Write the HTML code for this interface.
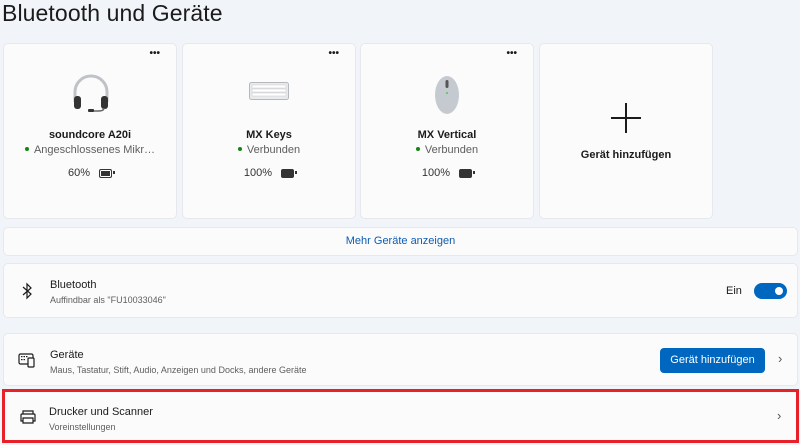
<!DOCTYPE html>
<html><head><meta charset="utf-8"><style>
*{box-sizing:border-box;margin:0;padding:0}
body{width:800px;height:445px;overflow:hidden;background:#f1f4f9;font-family:"Segoe UI","Liberation Sans",sans-serif;color:#1b1b1b;position:relative}
.a{position:absolute}
.card{position:absolute;top:43px;height:176px;width:174px;background:#fbfbfc;border:1px solid #e6e8ec;border-radius:5px}
.dots{position:absolute;top:4px;right:16px;font-size:10px;font-weight:bold;letter-spacing:0}
.name{position:absolute;top:85px;width:100%;text-align:center;font-size:11px;font-weight:bold}
.st{position:absolute;top:100px;width:100%;text-align:center;font-size:11px;color:#5e5e5e}
.st b{display:inline-block;width:4px;height:4px;border-radius:50%;background:#128712;vertical-align:middle;margin-right:5px;position:relative;top:-1px}
.bat{position:absolute;top:123px;width:100%;text-align:center;font-size:11px;color:#333}
.bi{display:inline-block;width:13px;height:9px;border:1.5px solid #333;border-radius:2px;vertical-align:middle;margin-left:9px;position:relative;background:#333;box-shadow:inset 0 0 0 1px #fff}
.bi:after{content:"";position:absolute;right:-4px;top:1.5px;width:2px;height:3px;background:#333}
.row{position:absolute;left:3px;width:795px;background:#fbfbfc;border:1px solid #e6e8ec;border-radius:5px}
.t{position:absolute;left:46px;font-size:11px}
.s{position:absolute;left:46px;font-size:9px;color:#5e5e5e}
</style></head><body>
<div class="a" style="left:2px;top:0;font-size:23px;color:#1b1b1b;letter-spacing:0.1px">Bluetooth und Geräte</div>

<div class="card" style="left:3px">
<div class="dots">•••</div>
<svg class="a" style="left:66px;top:28px" width="42" height="42" viewBox="0 0 42 42"><path d="M5 30 V20 a16 16 0 0 1 32 0 V30" fill="none" stroke="#bfc3c8" stroke-width="3"/><rect x="4" y="24" width="7" height="13" rx="3" fill="#333"/><rect x="31" y="24" width="7" height="13" rx="3" fill="#333"/><path d="M34 36 q0 3-6 3 h-6" fill="none" stroke="#666" stroke-width="1.5"/><rect x="18" y="37" width="6" height="3" rx="1" fill="#333"/></svg>
<div class="name">soundcore A20i</div>
<div class="st"><b></b>Angeschlossenes Mikr…</div>
<div class="bat">60%<span class="bi"></span></div>
</div>

<div class="card" style="left:182px">
<div class="dots">•••</div>
<svg class="a" style="left:66px;top:38px" width="40" height="20" viewBox="0 0 40 20"><rect x="0.5" y="0.5" width="39" height="17" rx="2" fill="#e8eaed" stroke="#b5b8bd"/><g fill="#fff" stroke="#c5c8cc" stroke-width=".5"><rect x="3" y="3" width="34" height="3"/><rect x="3" y="7" width="34" height="3"/><rect x="3" y="11" width="34" height="3"/></g></svg>
<div class="name">MX Keys</div>
<div class="st"><b></b>Verbunden</div>
<div class="bat">100%<span class="bi" style="box-shadow:none"></span></div>
</div>

<div class="card" style="left:360px">
<div class="dots">•••</div>
<svg class="a" style="left:73px;top:30px" width="26" height="42" viewBox="0 0 26 42"><ellipse cx="13" cy="21" rx="12" ry="19" fill="#c5cad0"/><rect x="11.5" y="6" width="3" height="8" rx="1.5" fill="#555"/><circle cx="13" cy="19" r="1" fill="#4c4"/></svg>
<div class="name">MX Vertical</div>
<div class="st"><b></b>Verbunden</div>
<div class="bat">100%<span class="bi" style="box-shadow:none"></span></div>
</div>

<div class="card" style="left:539px">
<svg class="a" style="left:70px;top:58px" width="32" height="32"><path d="M16 1 V31 M1 16 H31" stroke="#1b1b1b" stroke-width="2"/></svg>
<div class="name" style="top:105px">Gerät hinzufügen</div>
</div>

<div class="row" style="top:227px;height:29px"><div class="a" style="left:0;width:100%;text-align:center;top:7px;font-size:11px;color:#0f5cb0">Mehr Geräte anzeigen</div></div>

<div class="row" style="top:263px;height:55px">
<svg class="a" style="left:17px;top:18px" width="12" height="18" viewBox="0 0 12 18"><path d="M2 5 L10 12 L6 16 V2 L10 6 L2 13" fill="none" stroke="#1b1b1b" stroke-width="1.2"/></svg>
<div class="t" style="top:15px">Bluetooth</div>
<div class="s" style="top:31px">Auffindbar als "FU10033046"</div>
<div class="a" style="left:722px;top:21px;font-size:11px">Ein</div>
<div class="a" style="left:750px;top:19px;width:33px;height:16px;border-radius:8px;background:#0067c0"><div class="a" style="right:4px;top:4px;width:8px;height:8px;border-radius:50%;background:#fff"></div></div>
</div>

<div class="row" style="top:333px;height:53px">
<svg class="a" style="left:14px;top:18px" width="18" height="16" viewBox="0 0 18 16"><rect x="1" y="2" width="14" height="10" rx="1.5" fill="none" stroke="#1b1b1b" stroke-width="1.2"/><rect x="10" y="6" width="6" height="9" rx="1" fill="#fbfbfc" stroke="#1b1b1b" stroke-width="1.2"/><g fill="#1b1b1b"><rect x="3" y="4" width="1.5" height="1.2"/><rect x="5.5" y="4" width="1.5" height="1.2"/><rect x="8" y="4" width="1.5" height="1.2"/><rect x="3" y="7" width="1.5" height="1.2"/><rect x="5.5" y="7" width="1.5" height="1.2"/></g></svg>
<div class="t" style="top:15px">Geräte</div>
<div class="s" style="top:31px">Maus, Tastatur, Stift, Audio, Anzeigen und Docks, andere Geräte</div>
<div class="a" style="left:656px;top:14px;width:105px;height:25px;border-radius:4px;background:#0067c0;color:#fff;font-size:11px;text-align:center;line-height:25px">Gerät hinzufügen</div>
<div class="a" style="left:774px;top:17px;font-size:13px;color:#555">›</div>
</div>

<div class="a" style="left:2px;top:389px;width:797px;height:54px;border:3px solid #e8202a;background:#fbfbfc">
<svg class="a" style="left:14px;top:17px" width="18" height="16" viewBox="0 0 18 16"><path d="M4 5 V2 h10 v3 M4 12 H2 V6 a1 1 0 0 1 1-1 h12 a1 1 0 0 1 1 1 v6 h-2 M4 9 h10 v5 H4 z" fill="none" stroke="#1b1b1b" stroke-width="1.2"/></svg>
<div class="t" style="top:14px;left:44px">Drucker und Scanner</div>
<div class="s" style="top:30px;left:44px">Voreinstellungen</div>
<div class="a" style="left:772px;top:16px;font-size:13px;color:#555">›</div>
</div>
</body></html>
